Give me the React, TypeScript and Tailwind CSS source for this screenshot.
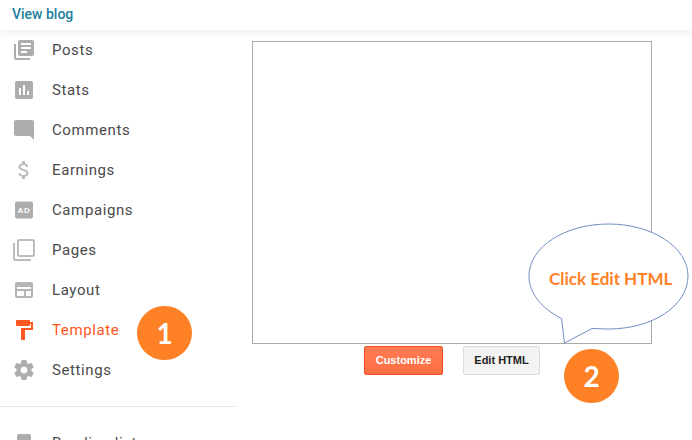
const navItems = [
  { label: 'Posts', color: '#adadad', d: 'M4 6H2v14c0 1.1.9 2 2 2h14v-2H4V6zm16-4H8c-1.1 0-2 .9-2 2v12c0 1.1.9 2 2 2h12c1.1 0 2-.9 2-2V4c0-1.1-.9-2-2-2zm-1 9H9V9h10v2zm-4 4H9v-2h6v2zm4-8H9V5h10v2z' },
  { label: 'Stats', color: '#adadad', d: 'M19 3H5c-1.1 0-2 .9-2 2v14c0 1.1.9 2 2 2h14c1.1 0 2-.9 2-2V5c0-1.1-.9-2-2-2zM9 17H7v-7h2v7zm4 0h-2V7h2v10zm4 0h-2v-4h2v4z' },
  { label: 'Comments', color: '#adadad', d: 'M21.99 4c0-1.1-.89-2-1.99-2H4c-1.1 0-2 .9-2 2v12c0 1.1.9 2 2 2h14l4 4-.01-18z' },
  { label: 'Earnings', color: '#bdbdbd', d: 'M11.8 10.9c-2.27-.59-3-1.2-3-2.15 0-1.09 1.01-1.85 2.7-1.85 1.78 0 2.44.85 2.5 2.1h2.21c-.07-1.72-1.12-3.3-3.21-3.81V3h-3v2.16c-1.94.42-3.5 1.68-3.5 3.61 0 2.31 1.91 3.46 4.7 4.13 2.5.6 3 1.48 3 2.41 0 .69-.49 1.79-2.7 1.79-2.06 0-2.87-.92-2.98-2.1h-2.2c.12 2.19 1.76 3.42 3.68 3.83V21h3v-2.15c1.95-.37 3.5-1.5 3.5-3.55 0-2.84-2.43-3.81-4.7-4.4z' },
  { label: 'Campaigns', color: '#adadad', d: 'ad' },
  { label: 'Pages', color: '#bdbdbd', d: 'M3 5H1v16c0 1.1.9 2 2 2h16v-2H3V5zm18-4H7c-1.1 0-2 .9-2 2v14c0 1.1.9 2 2 2h14c1.1 0 2-.9 2-2V3c0-1.1-.9-2-2-2zm0 16H7V3h14v14z' },
  { label: 'Layout', color: '#b5b5b5', d: 'M19 4H5c-1.1 0-2 .9-2 2v12c0 1.1.9 2 2 2h14c1.1 0 2-.9 2-2V6c0-1.1-.9-2-2-2zM5 18v-5h7v5H5zm14 0h-5v-5h5v5zm0-7H5V9h14v2z' },
  { label: 'Template', color: '#ff5722', d: 'M18 4V3c0-.55-.45-1-1-1H5c-.55 0-1 .45-1 1v4c0 .55.45 1 1 1h12c.55 0 1-.45 1-1V6h1v4H9v11c0 .55.45 1 1 1h2c.55 0 1-.45 1-1v-9h8V4h-3z', active: true },
  { label: 'Settings', color: '#adadad', d: 'M19.43 12.98c.04-.32.07-.64.07-.98s-.03-.66-.07-.98l2.11-1.65c.19-.15.24-.42.12-.64l-2-3.46c-.12-.22-.39-.3-.61-.22l-2.49 1c-.52-.4-1.08-.73-1.69-.98l-.38-2.65C14.46 2.18 14.25 2 14 2h-4c-.25 0-.46.18-.49.42l-.38 2.65c-.61.25-1.17.59-1.69.98l-2.49-1c-.23-.09-.49 0-.61.22l-2 3.46c-.13.22-.07.49.12.64l2.11 1.65c-.04.32-.07.65-.07.98s.03.66.07.98l-2.11 1.65c-.19.15-.24.42-.12.64l2 3.46c.12.22.39.3.61.22l2.49-1c.52.4 1.08.73 1.69.98l.38 2.65c.03.24.24.42.49.42h4c.25 0 .46-.18.49-.42l.38-2.65c.61-.25 1.17-.59 1.69-.98l2.49 1c.23.09.49 0 .61-.22l2-3.46c.12-.22.07-.49-.12-.64l-2.11-1.65zM12 15.5c-1.93 0-3.5-1.57-3.5-3.5s1.57-3.5 3.5-3.5 3.5 1.57 3.5 3.5-1.57 3.5-3.5 3.5z' },
]

const BOOKMARK = 'M17 3H7c-1.1 0-1.99.9-1.99 2L5 21l7-3 7 3V5c0-1.1-.9-2-2-2z'

function NavIcon({ d, color }: { d: string; color: string }) {
  return (
    <svg viewBox="0 0 24 24" className="w-6 h-6 shrink-0" fill={color}>
      {d === 'ad' ? (
        <>
          <rect x="3" y="3.500" width="18" height="17" rx="2" />
          <text x="12" y="15" textAnchor="middle" fontSize="8" fontWeight="700" fill="#fff" fontFamily="'Liberation Sans', sans-serif" letterSpacing="0.8">
            AD
          </text>
        </>
      ) : (
        <path d={d} />
      )}
    </svg>
  )
}

function NavRow({ label, d, color, active }: { label: string; d: string; color: string; active?: boolean }) {
  return (
    <div className={`h-10 flex items-center gap-4 pl-3 text-[15px] tracking-[0.6px] ${active ? 'text-[#ff5722]' : 'text-[#4a4a4a]'}`}>
      <NavIcon d={d} color={color} />
      <span>{label}</span>
    </div>
  )
}

function Badge({ n, className }: { n: string; className: string }) {
  return (
    <div className={`absolute w-[55px] h-[54px] rounded-full bg-[#ff8125] text-white flex items-center justify-center font-['Lato',sans-serif] font-bold text-[28px] ${className}`}>
      {n}
    </div>
  )
}

export default function App() {
  return (
    <div className="relative w-[692px] h-[440px] overflow-hidden bg-white font-['Roboto',sans-serif] flex flex-col">
      <header className="relative z-10 h-[30px] shrink-0 bg-white pl-3 pt-[6px] text-[14px] leading-4 font-medium text-[#1c7f9e] shadow-[0_2px_8px_rgba(0,0,0,0.08)]">
        View blog
      </header>

      <div className="flex flex-1 min-h-0">
        <aside className="w-[237px] shrink-0">
          {navItems.map((item) => (
            <NavRow key={item.label} {...item} />
          ))}
          <div className="mt-4 mb-4 border-t border-[#e8e8e8]" />
          <NavRow label="Reading list" d={BOOKMARK} color="#adadad" />
        </aside>

        <main className="pl-[15px] pt-[11px]">
          <div className="w-[400px] h-[303px] border border-[#a9a9a9] bg-white" />
          <div className="mt-[2px] flex justify-center gap-5">
            <button className="w-[79px] h-[29px] rounded-[2px] border border-[#f4511e] bg-gradient-to-b from-[#ff7b52] to-[#ff6e45] text-white text-[11px] font-bold font-['Liberation_Sans',sans-serif]">
              Customize
            </button>
            <button className="w-[77px] h-[29px] rounded-[2px] border border-[#dcdcdc] bg-[#f3f3f3] text-[#222222] text-[11px] font-bold font-['Liberation_Sans',sans-serif]">
              Edit HTML
            </button>
          </div>
        </main>
      </div>

      <Badge n="1" className="left-[137px] top-[306px]" />
      <Badge n="2" className="left-[564px] top-[349px]" />

      {/* speech bubble */}
      <svg className="absolute left-[520px] top-[215px] w-[172px] h-[135px]" viewBox="520 215 172 135" fill="#fff" stroke="#6f8fc0" strokeWidth="1">
        <path d="M561.5 318.5 C541 308 529 293 529 276 C529 247 565 224 608.5 224 C652 224 688 247 688 276 C688 306 652 329 608.5 329 C602 329 598 328.500 592 328.500 L564.500 343 Z" />
      </svg>
      <div className="absolute left-[549px] top-[269px] font-['Lato',sans-serif] font-bold text-[17px] leading-5 whitespace-nowrap text-[#ff8125]">
        Click Edit HTML
      </div>
    </div>
  )
}
